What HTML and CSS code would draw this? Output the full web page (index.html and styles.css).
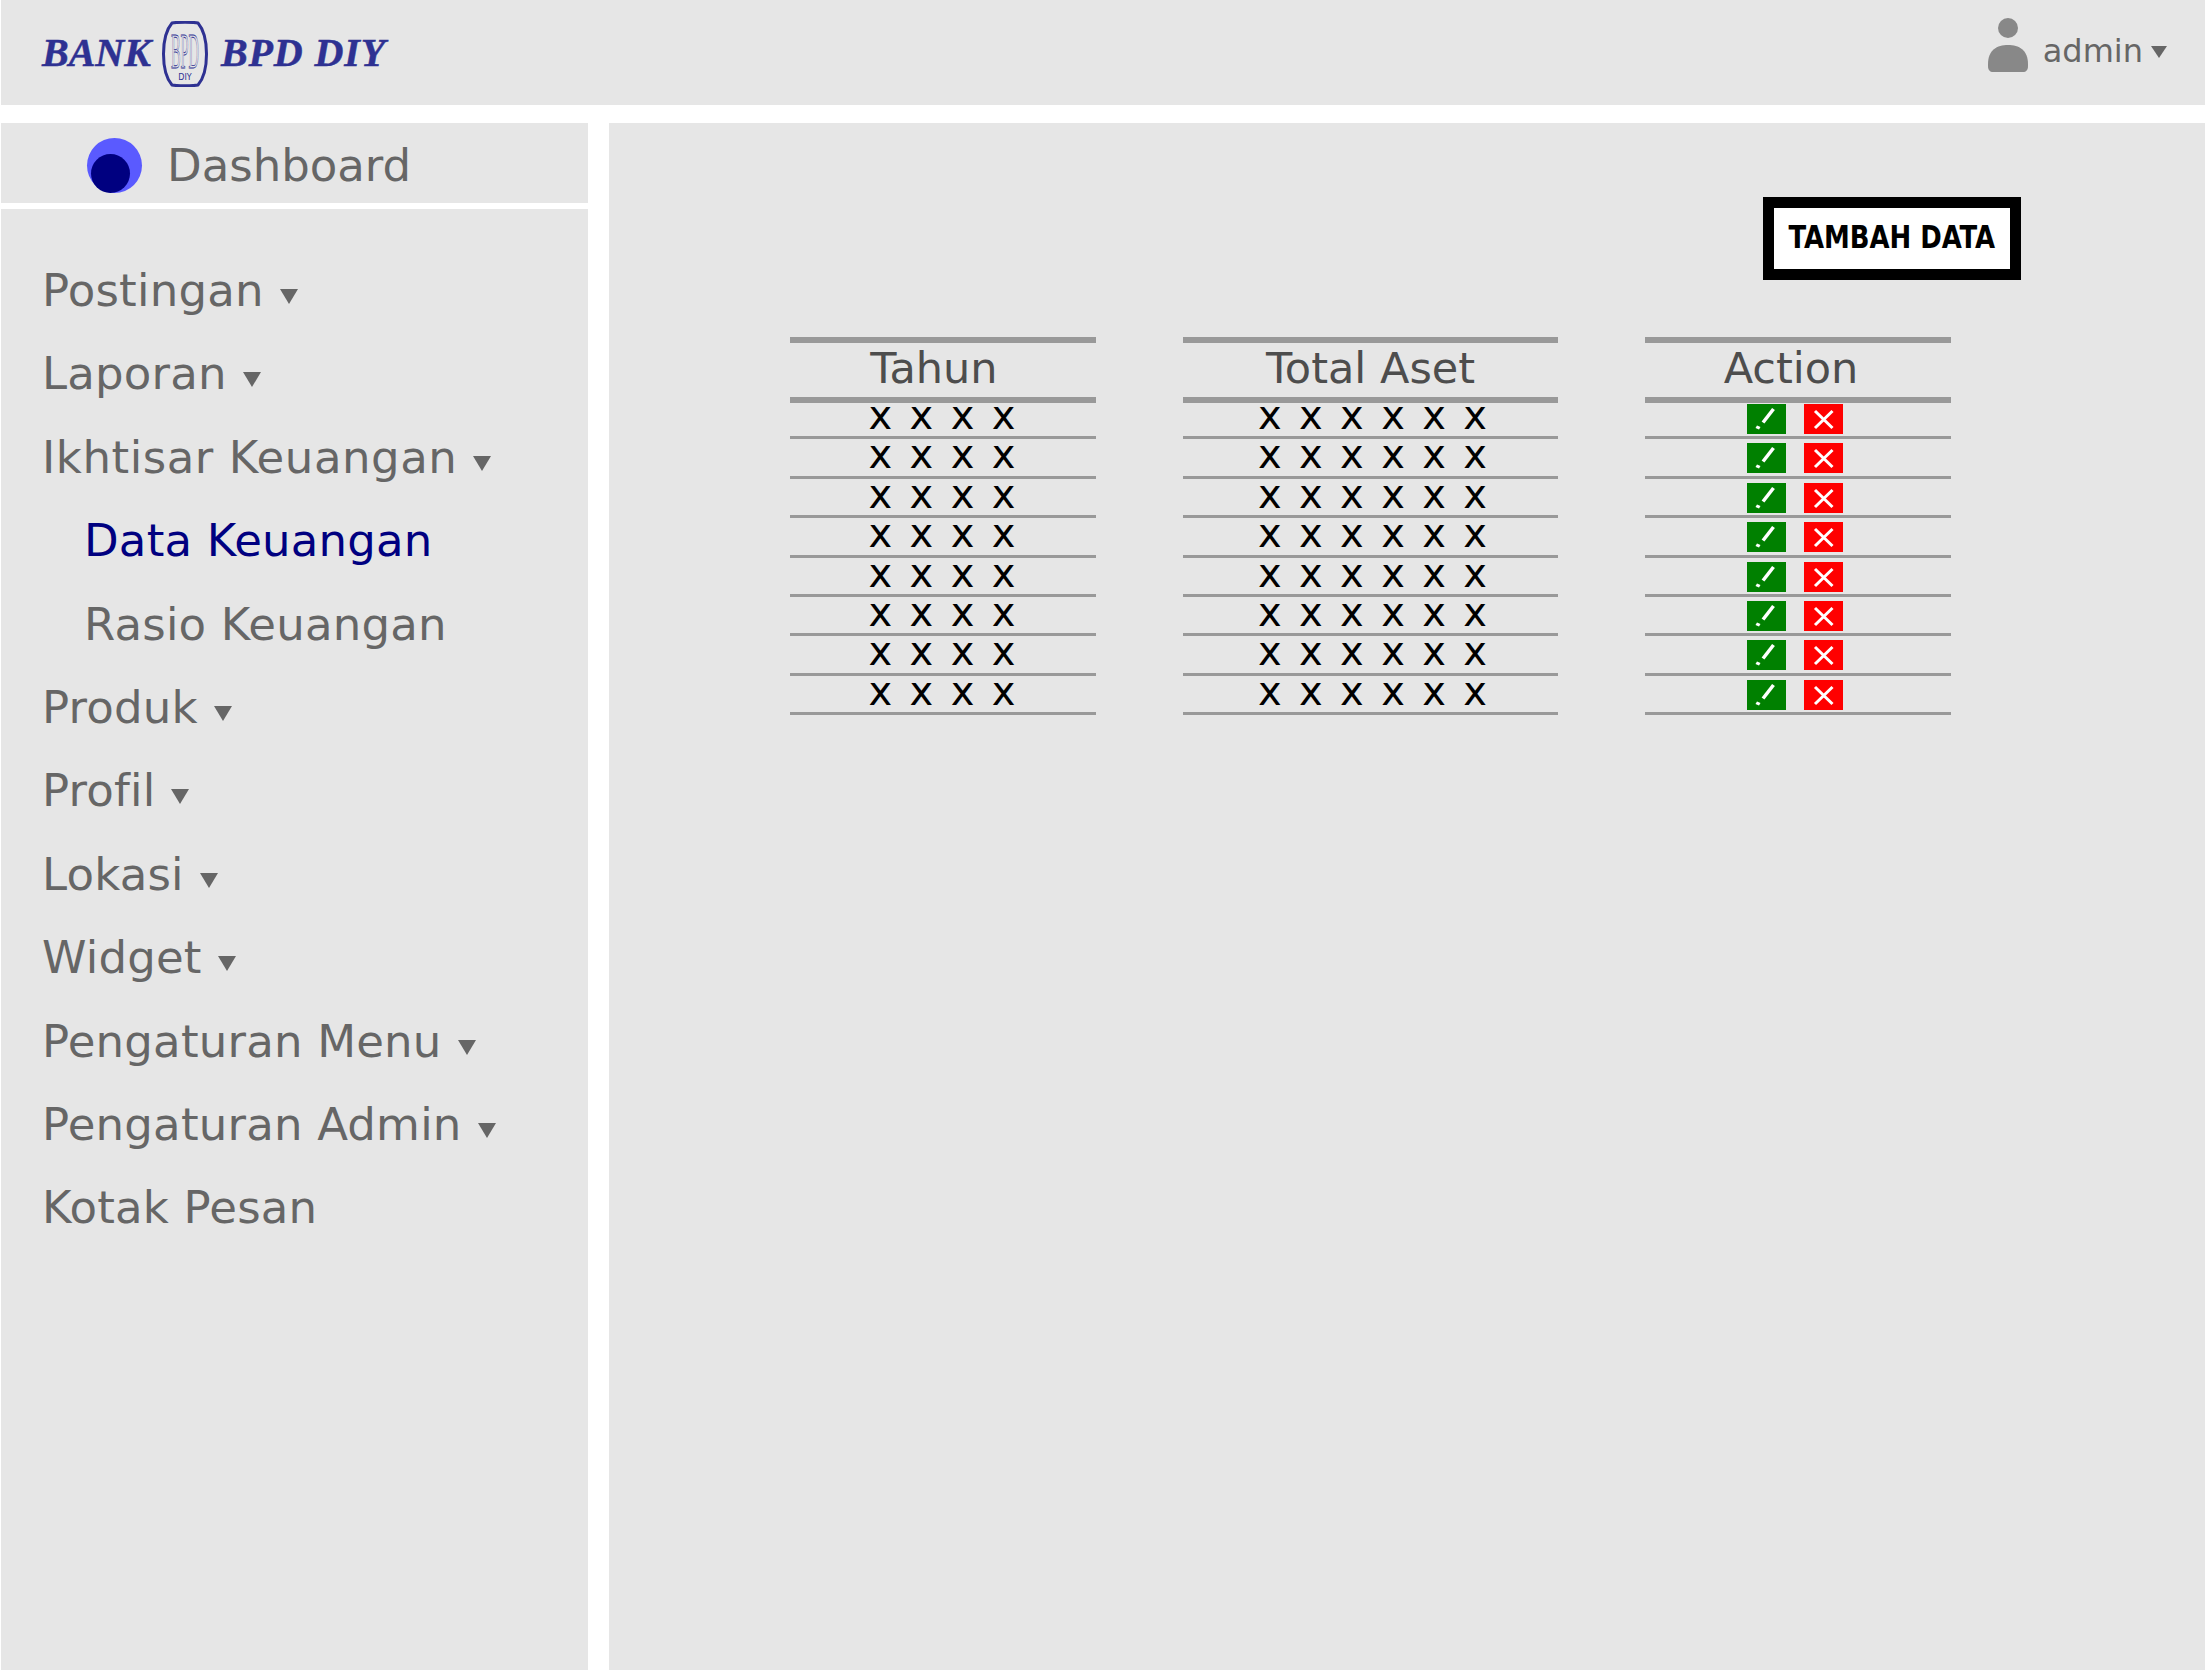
FILE: index.html
```html
<!DOCTYPE html>
<html lang="id">
<head>
<meta charset="utf-8">
<title>Data Keuangan</title>
<link rel="stylesheet" href="styles.css">
</head>
<body>
<svg class="defs" width="0" height="0" aria-hidden="true">
  <symbol id="i-edit" viewBox="0 0 39 30"><path d="M26.500 5 16 18.500" fill="none" stroke="#fff" stroke-width="3.500"/><path d="M10 21.500l3.500 1.500-1.500 2.500-3.500-1.500z" fill="#fff"/></symbol>
  <symbol id="i-del" viewBox="0 0 39 30"><path d="M11 7 28.500 24M28.500 7 11 24" fill="none" stroke="#fff" stroke-width="3"/></symbol>
</svg>
<header class="topbar">
  <div class="brand">
    <span class="brand-text brand-left">BANK</span>
    <svg class="brand-seal" width="46" height="66" viewBox="0 0 46 66">
      <path d="M10 2C14 1 32 1 36 2 42 9 44.500 20 44.500 33 44.500 46 42 57 36 64 32 65 14 65 10 64 4 57 1.500 46 1.500 33 1.500 20 4 9 10 2Z" fill="none" stroke="#2e3192" stroke-width="3"/>
      <text class="seal-bpd" x="23" y="47" text-anchor="middle" textLength="28" lengthAdjust="spacingAndGlyphs">BPD</text>
      <text class="seal-diy" x="23" y="59" text-anchor="middle">DIY</text>
    </svg>
    <span class="brand-text brand-right">BPD DIY</span>
  </div>
  <div class="user">
    <svg class="user-icon" width="40" height="54" viewBox="0 0 40 54"><circle cx="20" cy="10" r="10" fill="#888"/><path d="M0 46C0 32 9 27 20 27S40 32 40 46V48C40 52 38 54 35 54H5C2 54 0 52 0 48Z" fill="#888"/></svg>
    <span class="user-name">admin</span>
    <span class="caret caret-sm"></span>
  </div>
</header>
<div class="layout">
  <aside class="sidebar">
    <div class="dash">
      <span class="dash-icon"><span class="dash-dot"></span></span>
      <span>Dashboard</span>
    </div>
    <nav class="nav">
      <a class="nav-item">Postingan<span class="caret"></span></a>
      <a class="nav-item">Laporan<span class="caret"></span></a>
      <a class="nav-item nav-wide">Ikhtisar Keuangan<span class="caret"></span></a>
      <a class="nav-item nav-sub nav-active">Data Keuangan</a>
      <a class="nav-item nav-sub">Rasio Keuangan</a>
      <a class="nav-item">Produk<span class="caret"></span></a>
      <a class="nav-item">Profil<span class="caret"></span></a>
      <a class="nav-item">Lokasi<span class="caret"></span></a>
      <a class="nav-item">Widget<span class="caret"></span></a>
      <a class="nav-item">Pengaturan Menu<span class="caret"></span></a>
      <a class="nav-item">Pengaturan Admin<span class="caret"></span></a>
      <a class="nav-item">Kotak Pesan</a>
    </nav>
  </aside>
  <main class="main">
    <div class="toolbar"><button class="add-btn"><span class="add-label">TAMBAH DATA</span></button></div>
    <div class="tables">
      <div class="col col-year">
        <div class="col-head"><span class="shift-a">Tahun</span></div>
        <div class="cell">x x x x</div><div class="cell">x x x x</div><div class="cell">x x x x</div><div class="cell">x x x x</div>
        <div class="cell">x x x x</div><div class="cell">x x x x</div><div class="cell">x x x x</div><div class="cell">x x x x</div>
      </div>
      <div class="col col-asset">
        <div class="col-head">Total Aset</div>
        <div class="cell">x x x x x x</div><div class="cell">x x x x x x</div><div class="cell">x x x x x x</div><div class="cell">x x x x x x</div>
        <div class="cell">x x x x x x</div><div class="cell">x x x x x x</div><div class="cell">x x x x x x</div><div class="cell">x x x x x x</div>
      </div>
      <div class="col col-action">
        <div class="col-head"><span class="shift-b">Action</span></div>
        <div class="cell cell-act"><svg class="act act-edit"><use href="#i-edit"/></svg><svg class="act act-del"><use href="#i-del"/></svg></div>
        <div class="cell cell-act"><svg class="act act-edit"><use href="#i-edit"/></svg><svg class="act act-del"><use href="#i-del"/></svg></div>
        <div class="cell cell-act"><svg class="act act-edit"><use href="#i-edit"/></svg><svg class="act act-del"><use href="#i-del"/></svg></div>
        <div class="cell cell-act"><svg class="act act-edit"><use href="#i-edit"/></svg><svg class="act act-del"><use href="#i-del"/></svg></div>
        <div class="cell cell-act"><svg class="act act-edit"><use href="#i-edit"/></svg><svg class="act act-del"><use href="#i-del"/></svg></div>
        <div class="cell cell-act"><svg class="act act-edit"><use href="#i-edit"/></svg><svg class="act act-del"><use href="#i-del"/></svg></div>
        <div class="cell cell-act"><svg class="act act-edit"><use href="#i-edit"/></svg><svg class="act act-del"><use href="#i-del"/></svg></div>
        <div class="cell cell-act"><svg class="act act-edit"><use href="#i-edit"/></svg><svg class="act act-del"><use href="#i-del"/></svg></div>
      </div>
    </div>
  </main>
</div>
</body>
</html>
```
FILE: styles.css
```css
* { box-sizing: border-box; }
html, body { margin: 0; height: 100%; }
body {
  background: #fff;
  font-family: "DejaVu Sans", sans-serif;
  color: #666;
  height: 1670px;
  overflow: hidden;
  padding-left: 1px;
  display: flex;
  flex-direction: column;
}
.defs { position: absolute; }

.topbar {
  height: 105px;
  flex: none;
  background: #e6e6e6;
  display: flex;
  justify-content: space-between;
  padding: 0 38px 0 41px;
}
.brand { display: flex; align-items: center; padding-bottom: 1px; }
.brand-text {
  font-family: "Liberation Serif", serif;
  font-weight: bold;
  font-style: italic;
  font-size: 40px;
  color: #2e3192;
  -webkit-text-stroke: 0.5px #2e3192;
}
.brand-left { margin-right: 11px; }
.brand-right { margin-left: 13px; letter-spacing: 0.9px; }
.brand-seal { flex: none; margin-top: 3px; }
.seal-bpd { font-family: "Liberation Serif", serif; font-size: 50px; fill: none; stroke: #2e3192; stroke-width: 0.8; }
.seal-diy { font-family: "DejaVu Sans", sans-serif; font-size: 8px; fill: #2e3192; }

.user { display: flex; align-items: flex-start; }
.user-icon { flex: none; margin: 18px 15px 0 0; }
.user-name { font-size: 32px; line-height: 38px; margin-top: 32px; }

.caret {
  display: inline-block;
  width: 0;
  height: 0;
  margin-left: 16px;
  border-left: 9px solid transparent;
  border-right: 9px solid transparent;
  border-top: 15px solid #666;
  vertical-align: 2px;
}
.caret-sm {
  margin: 46px 0 0 8px;
  border-left-width: 8px;
  border-right-width: 8px;
  border-top-width: 12px;
}

.layout { flex: 1; display: flex; margin-top: 18px; gap: 21px; min-height: 0; }
.sidebar { width: 587px; flex: none; display: flex; flex-direction: column; gap: 6px; }
.dash {
  height: 80px;
  flex: none;
  background: #e6e6e6;
  display: flex;
  align-items: center;
  gap: 25px;
  padding: 4px 0 0 86px;
  font-size: 45px;
}
.dash-icon {
  width: 55px;
  height: 55px;
  border-radius: 50%;
  background: #5a5aff;
  position: relative;
  display: block;
}
.dash-dot {
  position: absolute;
  left: 4px;
  bottom: 0;
  width: 39px;
  height: 39px;
  border-radius: 50%;
  background: #000080;
}
.nav { flex: 1; background: #e6e6e6; padding-top: 40px; display: flex; flex-direction: column; }
.nav-item { display: block; height: 83.4px; line-height: 83.4px; padding-left: 41px; font-size: 45px; letter-spacing: 0.2px; white-space: nowrap; }
.nav-sub { padding-left: 83px; }
.nav-active { color: #000080; }
.nav-wide { letter-spacing: 0.55px; }

.main { flex: 1; background: #e6e6e6; padding: 74px 0 0 181px; min-width: 0; }
.toolbar { display: flex; padding-left: 973px; }
.add-btn {
  width: 258px;
  height: 83px;
  background: #fff;
  border: 11px solid #000;
  border-radius: 0;
  padding: 0 0 4px;
  display: flex;
  align-items: center;
  justify-content: center;
  font-family: "DejaVu Sans", sans-serif;
  font-stretch: condensed;
  font-weight: bold;
  font-size: 32px;
  color: #000;
}
.add-label { display: inline-block; transform: scaleX(0.9); white-space: nowrap; }

.tables { display: flex; gap: 87px; margin-top: 57px; }
.col { flex: none; }
.col-year, .col-action { width: 306px; }
.col-asset { width: 375px; }
.col-head {
  height: 66px;
  margin-bottom: -3px;
  border-top: 6px solid #999;
  border-bottom: 6px solid #999;
  text-align: center;
  font-size: 43px;
  line-height: 50px;
  color: #4d4d4d;
}
.shift-a { margin-right: 18px; }
.shift-b { margin-right: 14px; }
.cell {
  height: 39.4px;
  border-bottom: 3px solid #999;
  text-align: center;
  color: #000;
  font-size: 40px;
  line-height: 30px;
  word-spacing: 4.7px;
  white-space: nowrap;
}
.col-year .cell { padding-right: 2px; }
.col-asset .cell { padding-left: 4px; }
.col-action .cell-act { display: flex; justify-content: center; gap: 18px; padding: 4px 6px 0 0; }
.act { display: block; width: 39px; height: 30px; flex: none; }
.act-edit { background: #008000; }
.act-del { background: #f00; }
```
